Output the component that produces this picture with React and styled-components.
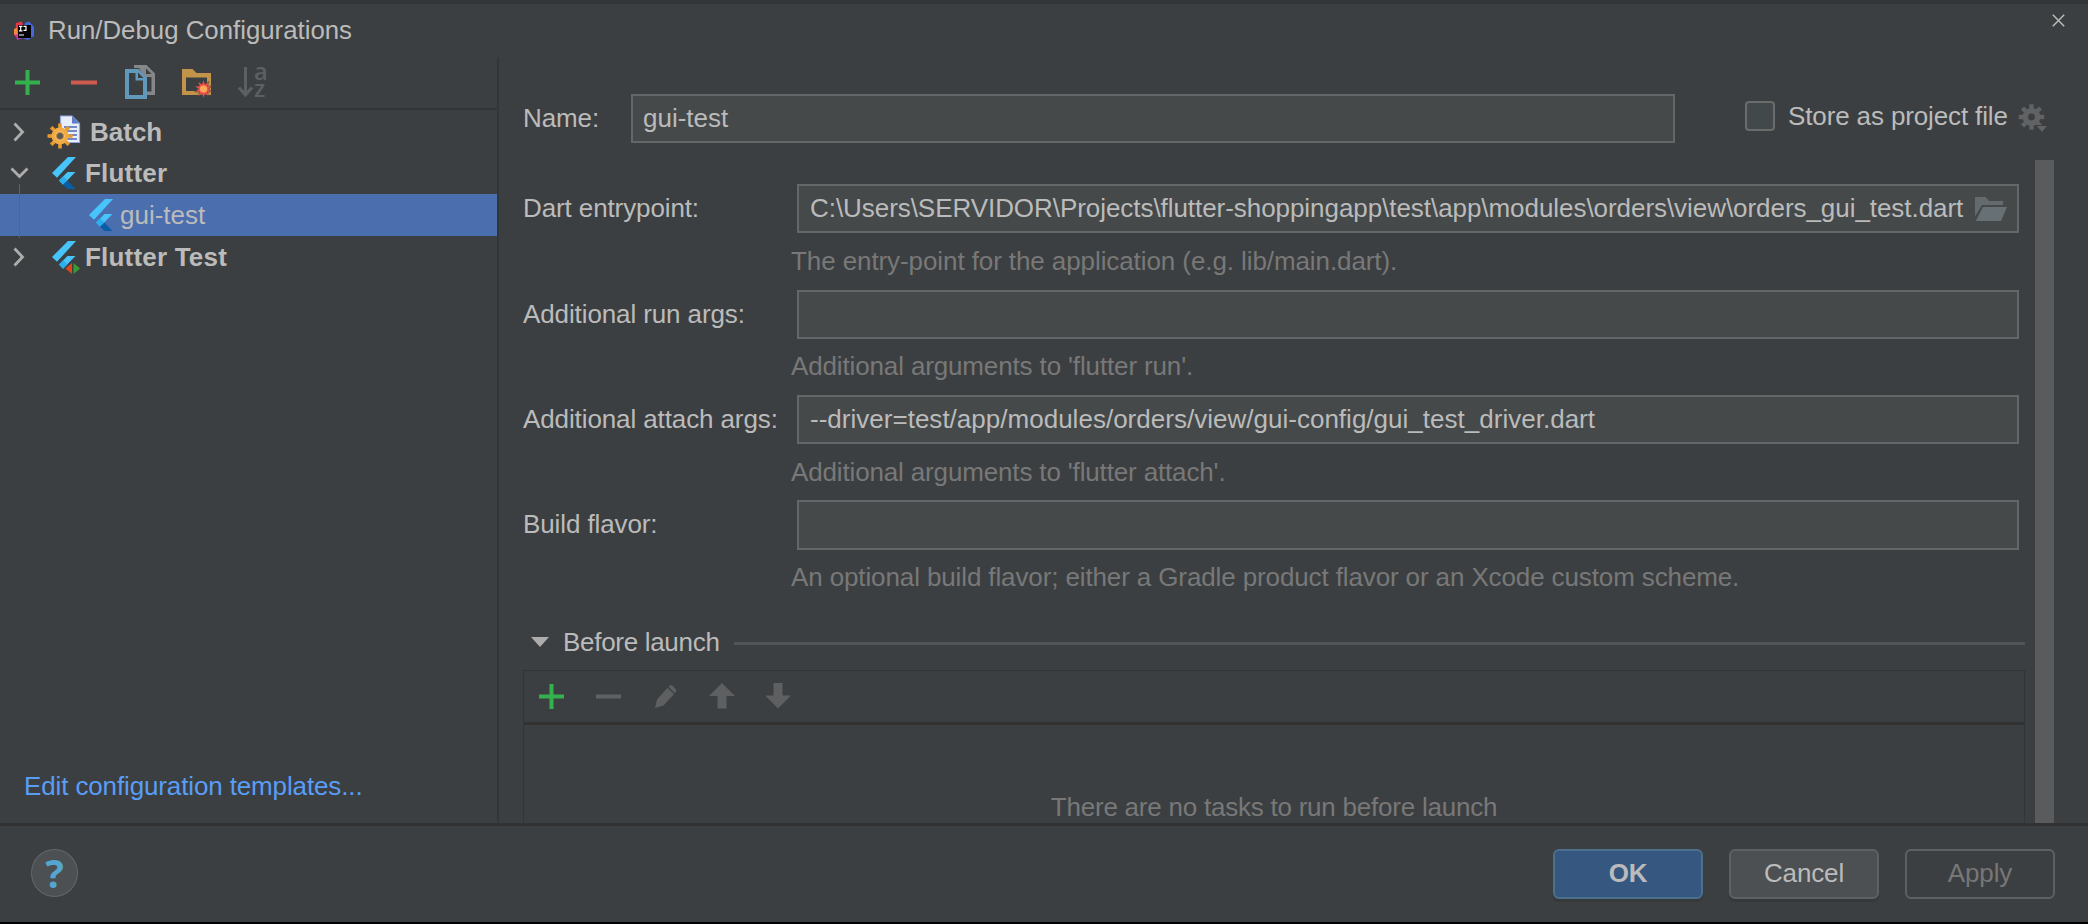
import React from 'react';
import styled, { createGlobalStyle, css } from 'styled-components';

const GlobalStyle = createGlobalStyle`
  * { box-sizing: border-box; }
  html, body { margin: 0; padding: 0; background: #000; }
  body { font-family: "Liberation Sans", Arial, sans-serif; font-size: 26px; color: #bbbbbb; overflow: hidden; }
  svg { display: block; flex: none; overflow: visible; }
`;

const Dialog = styled.div`
  width: 2088px;
  height: 922px;
  display: flex;
  flex-direction: column;
  background: #3c3f41;
  border-top: 4px solid #333638;
`;

const Main = styled.div`
  display: flex;
  height: 819px;
`;

const Sidebar = styled.div`
  width: 499px;
  display: flex;
  flex-direction: column;
`;

const TitleBar = styled.header`
  height: 53px;
  display: flex;
  align-items: center;
  gap: 14px;
  padding: 0 0 0 14px;
`;

const Title = styled.span`
  font-size: 25.8px;
  white-space: nowrap;
`;

const SideBody = styled.div`
  flex: 1;
  display: flex;
  flex-direction: column;
  border-right: 2px solid #333537;
`;

const SideToolbar = styled.div`
  height: 53px;
  display: flex;
  align-items: center;
  border-bottom: 2px solid #323436;
  padding: 0 0 1px 15px;
`;

const Slot = styled.span`
  width: ${(p) => p.$w}px;
  display: flex;
`;

const Tree = styled.ul`
  list-style: none;
  margin: 0;
  padding: 0;
  flex: 1;
`;

const TreeRow = styled.li`
  height: 42px;
  display: flex;
  align-items: center;
  position: relative;
  padding-top: ${(p) => p.$drop || 0}px;
  padding-left: ${(p) => (p.$child ? 89 : 10)}px;
  background: ${(p) => (p.$selected ? '#4b6eaf' : 'transparent')};
`;

const Arrow = styled.span`
  width: ${(p) => p.$w}px;
`;

const RowIcon = styled.span`
  width: ${(p) => p.$w}px;
`;

const RowLabel = styled.span`
  font-weight: ${(p) => (p.$bold ? 700 : 400)};
  line-height: 30px;
  letter-spacing: ${(p) => p.$ls || 0}px;
`;

const Guide = styled.i`
  position: absolute;
  left: 19px;
  top: -10px;
  width: 1px;
  height: 54px;
  background: #606366;
`;

const TemplatesLink = styled.a`
  color: #589df6;
  padding: 0 0 22px 24px;
  line-height: 30px;
  letter-spacing: -0.13px;
`;

const Content = styled.div`
  flex: 1;
  display: flex;
  flex-direction: column;
  padding-left: 24px;
`;

const ContentHead = styled.div`
  height: 90px;
  display: flex;
  justify-content: flex-end;
  padding: 10px 23px 0 0;
`;

const NameRow = styled.div`
  display: flex;
  height: 50px;
`;

const Label = styled.label`
  width: ${(p) => p.$w}px;
  line-height: 30px;
  padding-top: 9px;
  white-space: nowrap;
  letter-spacing: -0.11px;
`;

const Field = styled.div`
  width: ${(p) => p.$w}px;
  height: 49.3px;
  display: flex;
  align-items: center;
  justify-content: space-between;
  background: #45494a;
  border: 2px solid #646768;
  padding: 0 10px 0 ${(p) => p.$pad || 11}px;
  white-space: nowrap;
  letter-spacing: ${(p) => p.$ls || 0}px;
`;

const Store = styled.div`
  display: flex;
  margin-left: 70px;
  padding-top: 7px;
`;

const Checkbox = styled.span`
  width: 30px;
  height: 30px;
  border: 2px solid #6b6b6b;
  border-radius: 4px;
  background: #43494a;
  margin-right: 13px;
`;

const StoreLabel = styled.span`
  width: 231px;
  line-height: 30px;
  white-space: nowrap;
  letter-spacing: -0.13px;
`;

const StoreGear = styled.span`
  padding-top: 2.5px;
`;

const Scroll = styled.div`
  flex: 1;
  display: flex;
  margin-top: 16px;
`;

const Form = styled.div`
  width: 1502px;
  padding-top: 24.2px;
`;

const Track = styled.div`
  width: 19px;
  margin-left: 10px;
  background: #595b5d;
`;

const FormGroup = styled.div`
  display: flex;
  flex-wrap: wrap;
  align-content: flex-start;
  height: 105.4px;
`;

const Hint = styled.div`
  width: 100%;
  padding: 12.400px 0 0 268px;
  line-height: 30px;
  color: #787878;
  letter-spacing: ${(p) => p.$ls || 0}px;
`;

const Section = styled.div`
  display: flex;
  align-items: center;
  height: 64.2px;
  padding: 8px 0 0 8px;
  gap: 14px;
`;

const SectionTitle = styled.span`
  line-height: 30px;
  white-space: nowrap;
  letter-spacing: -0.3px;
`;

const Rule = styled.span`
  flex: 1;
  height: 3px;
  background: #515354;
  margin: 4px 0 0 0;
`;

const TaskPanel = styled.div`
  height: 153px;
  border: 1px solid #323436;
  border-bottom: 0;
`;

const TaskToolbar = styled.div`
  height: 54px;
  display: flex;
  align-items: center;
  border-bottom: 3px solid #323232;
  padding-left: 15px;
`;

const Empty = styled.div`
  color: #787878;
  text-align: center;
  padding-top: 67px;
  line-height: 30px;
  letter-spacing: -0.23px;
`;

const Footer = styled.footer`
  height: 99px;
  border-top: 3px solid #323232;
  display: flex;
  align-items: flex-start;
  padding: 23px 33px 0 31px;
`;

const Help = styled.button`
  width: 47px;
  height: 48px;
  padding: 0;
  border-radius: 50%;
  border: 1px solid #64676a;
  background: #4c5052;
  color: #55a6cf;
  font: 700 39px/46px "Open Sans", sans-serif;
  margin-right: auto;
`;

const Button = styled.button`
  width: 150px;
  height: 49.500px;
  margin-left: 26px;
  padding: 0 0 1px;
  border-radius: 6px;
  border: 2px solid #5e6162;
  background: #4c5052;
  color: #bbbbbb;
  font: 400 26px/30px "Liberation Sans", Arial, sans-serif;
  letter-spacing: -0.15px;
  box-shadow: 0 3px 1px #36393b;
  ${(p) => p.$primary && css`
    background: #365880;
    border-color: #4c708c;
    font-weight: 700;
  `}
  ${(p) => p.$disabled && css`
    background: transparent;
    color: #777777;
    box-shadow: none;
  `}
`;

const Plus = () => (
  <svg width="25" height="25" viewBox="0 0 25 25">
    <path d="M10.5 0h4v10.500h10.500v4h-10.500v10.500h-4v-10.500h-10.500v-4h10.500z" fill="#35b04f" />
  </svg>
);

const Minus = ({ color = '#5f6162', w = 26 }) => (
  <svg width={w} height="25" viewBox={`0 0 ${w} 25`}>
    <rect y="10.500" width={w} height="4" fill={color} />
  </svg>
);

const CopyIcon = () => (
  <svg width="30" height="34" viewBox="0 0 30 34">
    <path d="M9 0h12.500l8.500 8.500v21.500h-8v-3.500h4.500V12h-8L14 3H9z" fill="#858789" />
    <path d="M21 3.500v5.500h5.500z" fill="#3c3f41" />
    <path fillRule="evenodd" d="M0 4h13.500l8.500 8.500V34H0zM4 8v22h14V15.500h-7.500V8z" fill="#6199bd" />
    <path d="M13 7.500v5.500h5.500z" fill="#3c3f41" />
  </svg>
);

const burst = Array.from({ length: 20 }, (_, i) => {
  const a = (i * Math.PI) / 10 - Math.PI / 2;
  const r = i % 2 ? 5 : 9.300;
  return `${21.500 + r * Math.cos(a)},${20 + r * Math.sin(a)}`;
}).join(' ');

const FolderNew = () => (
  <svg width="29" height="26" viewBox="0 0 29 26">
    <path fillRule="evenodd" d="M0 0h10.500l4 4H29v22H0zM4 8.500v13.500h21V8.500z" fill="#c4934a" />
    <polygon points={burst} fill="#f2524a" stroke="#3c3f41" strokeWidth="0.500" />
    <circle cx="21.500" cy="20" r="3.600" fill="#fba95a" />
  </svg>
);

const AZ = styled.span`
  display: flex;
  flex-direction: column;
  color: #5d6062;
  font: 600 23.500px/17px "Open Sans", sans-serif;
  padding-bottom: 5px;
`;

const SortArrow = () => (
  <svg width="16" height="30" viewBox="0 0 16 30">
    <path d="M7.500 0v28M1 20.500l6.500 7.500 6.500-7.500" fill="none" stroke="#5d6062" strokeWidth="3" />
  </svg>
);

const ChevronRight = () => (
  <svg width="14" height="20" viewBox="0 0 14 20">
    <path d="M4.500 1.500l8 8.500-8 8.500" fill="none" stroke="#adadad" strokeWidth="2.800" />
  </svg>
);

const ChevronDown = () => (
  <svg width="20" height="12" viewBox="0 0 20 12">
    <path d="M1.500 1.500l8 8 8-8" fill="none" stroke="#adadad" strokeWidth="2.800" />
  </svg>
);

const FlutterIcon = ({ test }) => (
  <svg width={test ? 28 : 24} height="32" viewBox={`0 0 ${test ? 28 : 24} 32`}>
    <path d="M16 0h8L5 20.800 0 16z" fill="#47c5fb" />
    <path d="M15.500 15h8L11 27.800 7 23.500z" fill="#47c5fb" />
    <path d="M7 23.500l4.200-4.200 4.300 4.200-4.500 4.300z" fill="#2aaeee" />
    {!test && <path d="M11 27.800l4.500-4.300 8 8.500h-8z" fill="#0a5ea5" />}
    {test && <path d="M20 22v11l-6.600-5.500z" fill="#d9491c" />}
    {test && <path d="M21.500 22v11l6.600-5.500z" fill="#3c9a34" />}
  </svg>
);

const teeth = (cx, cy, ri, ro, w, fill) =>
  Array.from({ length: 8 }, (_, i) => (
    <rect key={i} x={cx - w / 2} y={cy - ro} width={w} height={ro - ri} fill={fill} transform={`rotate(${i * 45} ${cx} ${cy})`} />
  ));

const BatchIcon = () => (
  <svg width="34" height="34" viewBox="0 0 34 34">
    <path d="M13.500 1h11.500l7.500 7.500v19h-19z" fill="#e8eefc" stroke="#8fa9de" strokeWidth="1.200" />
    <path d="M25 1v7.500h7.500z" fill="#5f7fc4" />
    <path d="M17 12h13M17 16h13M19 20h11M19 24h11" stroke="#7289c4" strokeWidth="1.800" />
    {teeth(13, 21, 7, 12.500, 3.600, '#e89a2c')}
    <circle cx="13" cy="21" r="6.500" fill="#f7d9a0" stroke="#f0ab45" strokeWidth="4" />
    <circle cx="13" cy="21" r="3.600" fill="#5c5a58" stroke="#c98a2f" strokeWidth="1" />
  </svg>
);

const IdeaLogo = () => (
  <svg width="20" height="20" viewBox="0 0 20 20">
    <path d="M2 2l6-1.500L10 10 4 18l-4-4 1.500-5z" fill="#f0324d" />
    <path d="M0 8l3-1 1 8-4-2z" fill="#f58a3a" />
    <path d="M11 2l4-1.500 5 5V15l-6 4-6-2z" fill="#4666e8" />
    <path d="M2 13l7 4-6 2z" fill="#b638c8" />
    <rect x="4" y="4" width="13" height="13" fill="#000" />
    <path d="M5 5.300h3.500M6.700 5.300v4.500M5 9.800h3.500M9.500 5.300h2.500v4h-2.500M5 14h5" fill="none" stroke="#fff" strokeWidth="1.200" />
  </svg>
);

const CloseIcon = () => (
  <svg width="13" height="13" viewBox="0 0 13 13">
    <path d="M.8.8l11.400 11.400M12.200.8L.8 12.200" stroke="#bbbbbb" strokeWidth="1.500" />
  </svg>
);

const GearIcon = () => (
  <svg width="28" height="30" viewBox="0 0 28 30">
    {teeth(12.500, 13, 7, 12.700, 4.400, '#606263')}
    <circle cx="12.500" cy="13" r="6.200" fill="none" stroke="#606263" strokeWidth="5.600" />
    <path d="M17 21.500h12l-6 7z" fill="#606263" stroke="#3c3f41" strokeWidth="1" />
  </svg>
);

const OpenFolder = () => (
  <svg width="32" height="24" viewBox="0 0 32 24">
    <path d="M0 0h10.500l3.500 4h14v4H7L0 19.500z" fill="#646b6e" />
    <path d="M8 10h24l-6 14H.8z" fill="#677175" />
  </svg>
);

const Pencil = () => (
  <svg width="22" height="23" viewBox="0 0 22 23">
    <path d="M0 23l2-8.500L12.500 2.800l6.500 6.400L8.500 20.500zM13.500 1.800l1-1q1.500-1.300 3 0l3.200 3.200q1.500 1.500 0 3l-1 1.200z" fill="#5d5f60" />
  </svg>
);

const MoveArrow = ({ down }) => (
  <svg width="26" height="26" viewBox="0 0 26 26">
    <path d="M13 0l13 13h-8.500v12.500h-9V13H0z" fill="#5d5f60" transform={down ? 'rotate(180 13 12.750)' : undefined} />
  </svg>
);

const Triangle = () => (
  <svg width="18" height="10" viewBox="0 0 18 10">
    <path d="M0 0h18l-9 10z" fill="#adadad" />
  </svg>
);

const fields = [
  {
    label: 'Dart entrypoint:',
    value: 'C:\\Users\\SERVIDOR\\Projects\\flutter-shoppingapp\\test\\app\\modules\\orders\\view\\orders_gui_test.dart',
    valueSpacing: -0.055,
    hint: 'The entry-point for the application (e.g. lib/main.dart).',
    hintSpacing: -0.09,
    browse: true,
  },
  { label: 'Additional run args:', value: '', hint: "Additional arguments to 'flutter run'.", hintSpacing: -0.14 },
  {
    label: 'Additional attach args:',
    value: '--driver=test/app/modules/orders/view/gui-config/gui_test_driver.dart',
    valueSpacing: 0.015,
    hint: "Additional arguments to 'flutter attach'.",
    hintSpacing: -0.15,
  },
  {
    label: 'Build flavor:',
    value: '',
    hint: 'An optional build flavor; either a Gradle product flavor or an Xcode custom scheme.',
    hintSpacing: -0.12,
  },
];

export default function App() {
  return (
    <>
      <GlobalStyle />
      <Dialog>
        <Main>
          <Sidebar>
            <TitleBar>
              <IdeaLogo />
              <Title>Run/Debug Configurations</Title>
            </TitleBar>
            <SideBody>
              <SideToolbar>
                <Slot $w={56}><Plus /></Slot>
                <Slot $w={54}><Minus color="#cf5b50" /></Slot>
                <Slot $w={57}><CopyIcon /></Slot>
                <Slot $w={56}><FolderNew /></Slot>
                <SortArrow />
                <AZ><span>a</span><span>z</span></AZ>
              </SideToolbar>
              <Tree>
                <TreeRow $drop={2}>
                  <Arrow $w={37}><ChevronRight /></Arrow>
                  <RowIcon $w={43}><BatchIcon /></RowIcon>
                  <RowLabel $bold>Batch</RowLabel>
                </TreeRow>
                <TreeRow>
                  <Arrow $w={42}><ChevronDown /></Arrow>
                  <RowIcon $w={33}><FlutterIcon /></RowIcon>
                  <RowLabel $bold $ls={0.19}>Flutter</RowLabel>
                </TreeRow>
                <TreeRow $child $selected>
                  <Guide />
                  <RowIcon $w={31}><FlutterIcon /></RowIcon>
                  <RowLabel>gui-test</RowLabel>
                </TreeRow>
                <TreeRow>
                  <Arrow $w={42}><ChevronRight /></Arrow>
                  <RowIcon $w={33}><FlutterIcon test /></RowIcon>
                  <RowLabel $bold $ls={0.2}>Flutter Test</RowLabel>
                </TreeRow>
              </Tree>
              <TemplatesLink>Edit configuration templates...</TemplatesLink>
            </SideBody>
          </Sidebar>
          <Content>
            <ContentHead><CloseIcon /></ContentHead>
            <NameRow>
              <Label $w={108}>Name:</Label>
              <Field $w={1044} $pad={10}>gui-test</Field>
              <Store>
                <Checkbox />
                <StoreLabel>Store as project file</StoreLabel>
                <StoreGear><GearIcon /></StoreGear>
              </Store>
            </NameRow>
            <Scroll>
              <Form>
                {fields.map((f) => (
                  <FormGroup key={f.label}>
                    <Label $w={274}>{f.label}</Label>
                    <Field $w={1222} $ls={f.valueSpacing}>
                      <span>{f.value}</span>
                      {f.browse && <OpenFolder />}
                    </Field>
                    <Hint $ls={f.hintSpacing}>{f.hint}</Hint>
                  </FormGroup>
                ))}
                <Section>
                  <Triangle />
                  <SectionTitle>Before launch</SectionTitle>
                  <Rule />
                </Section>
                <TaskPanel>
                  <TaskToolbar>
                    <Slot $w={57}><Plus /></Slot>
                    <Slot $w={59}><Minus w={25} /></Slot>
                    <Slot $w={54}><Pencil /></Slot>
                    <Slot $w={56}><MoveArrow /></Slot>
                    <Slot $w={56}><MoveArrow down /></Slot>
                  </TaskToolbar>
                  <Empty>There are no tasks to run before launch</Empty>
                </TaskPanel>
              </Form>
              <Track />
            </Scroll>
          </Content>
        </Main>
        <Footer>
          <Help>?</Help>
          <Button $primary>OK</Button>
          <Button>Cancel</Button>
          <Button $disabled>Apply</Button>
        </Footer>
      </Dialog>
    </>
  );
}
